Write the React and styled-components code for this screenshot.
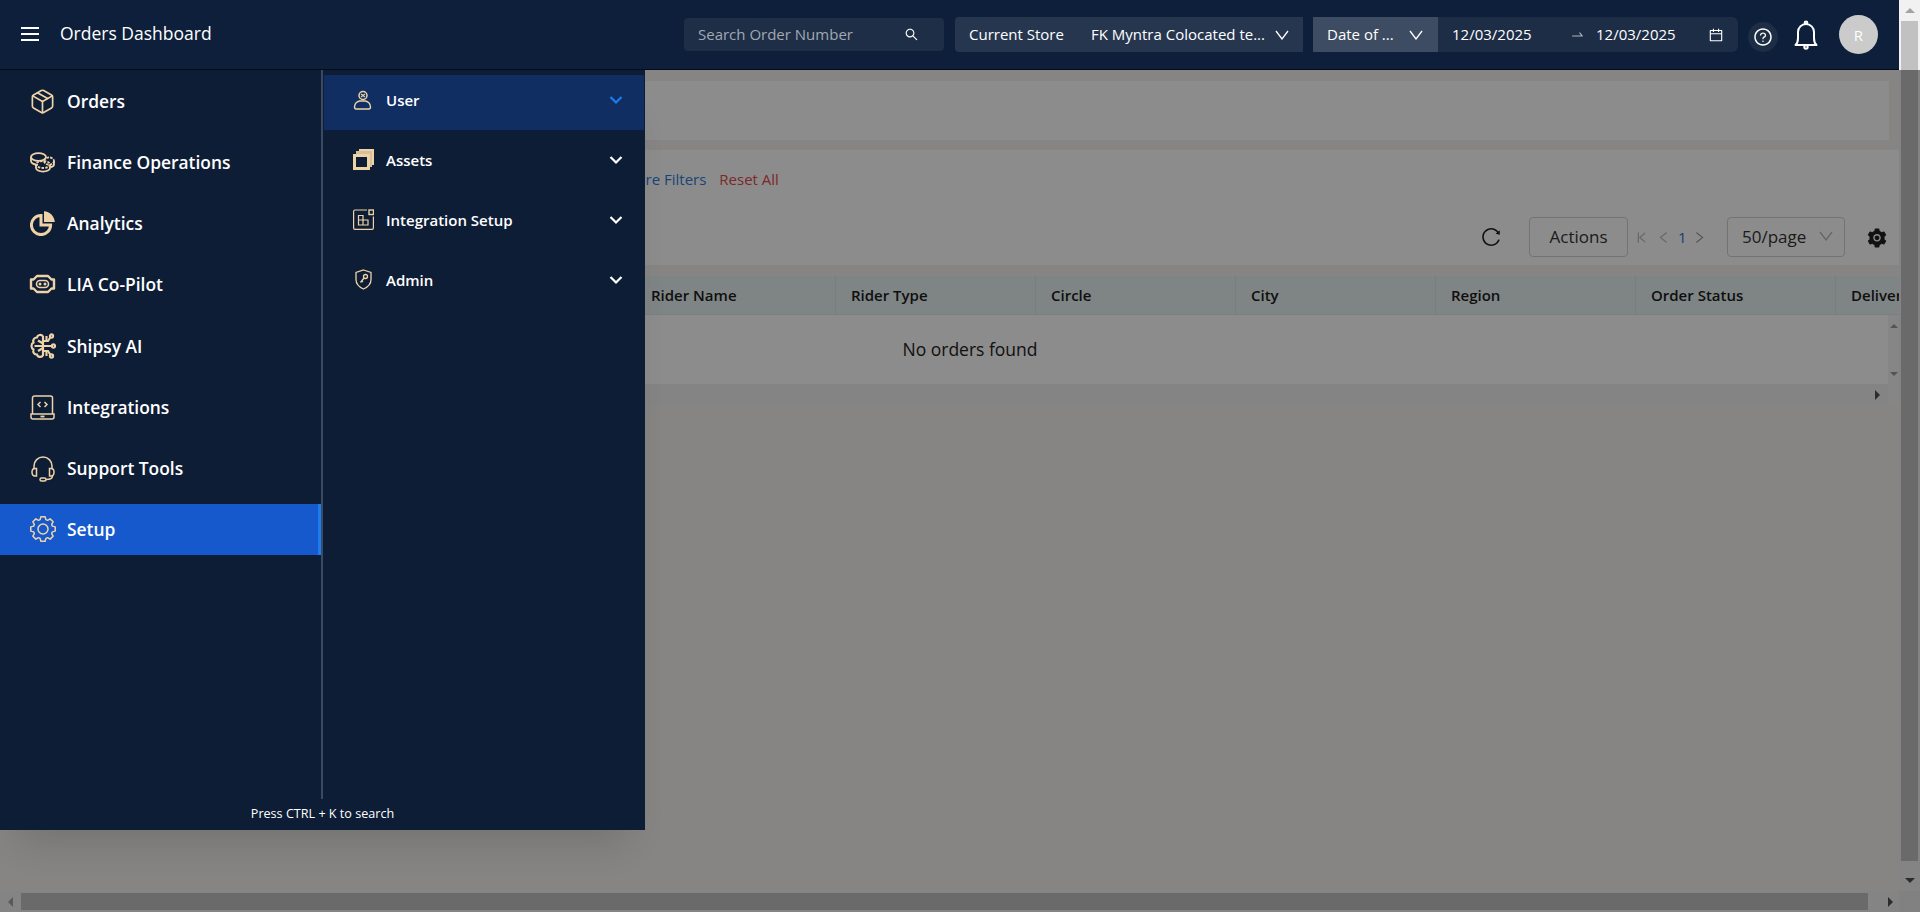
import React from "react";
import styled, { createGlobalStyle } from "styled-components";
import { Package } from "lucide-react";
import {
  AiFillSetting,
  AiOutlineCalendar,
  AiOutlineLeft,
  AiOutlineQuestionCircle,
  AiOutlineReload,
  AiOutlineRight,
  AiOutlineSearch,
  AiOutlineSwapRight,
  AiOutlineVerticalRight,
} from "react-icons/ai";

const GOLD = "#eed3a8";

const GlobalStyle = createGlobalStyle`
  html, body {
    margin: 0;
    padding: 0;
    overflow: hidden;
    font-family: "Open Sans", "Noto Sans", Arial, sans-serif;
  }
  * {
    box-sizing: border-box;
  }
`;

const Screen = styled.div`
  position: relative;
  width: 1920px;
  height: 912px;
  overflow: hidden;
  background: #f5f3ef;
`;

const Header = styled.header`
  display: flex;
  align-items: center;
  width: 1899px;
  height: 70px;
  padding: 0 21px 0 21px;
  background: #0d1f3a;
  border-bottom: 1px solid #060c16;
  color: #fff;
`;

const MenuLines = styled.span`
  display: flex;
  flex-direction: column;
  justify-content: space-between;
  width: 18px;
  height: 14px;
  margin: 0 21px 2px 0;

  i {
    display: block;
    height: 2px;
    background: #fff;
  }
`;

const Title = styled.div`
  flex: 1;
  margin-bottom: 4px;
  font-size: 17.5px;
`;

const BarText = styled.span`
  margin-bottom: 2px;
  white-space: nowrap;
`;

const SearchBox = styled.div`
  display: flex;
  align-items: center;
  justify-content: space-between;
  width: 260px;
  height: 33px;
  padding: 0 25px 0 14px;
  margin-right: 11px;
  border-radius: 4px;
  background: #1e2e47;
  color: #a2a8b1;
  font-size: 15px;

  svg {
    color: #fff;
    font-size: 15px;
  }
`;

const StoreSelect = styled.div`
  display: flex;
  align-items: center;
  width: 348px;
  height: 35px;
  padding: 0 14px;
  margin-right: 10px;
  border-radius: 4px 0 0 4px;
  background: #26364f;
  font-size: 15px;
`;

const StoreLabel = styled(BarText)`
  width: 122px;
`;

const StoreValue = styled(BarText)`
  flex: 1;
`;

const ThinChevron = styled.svg`
  flex: none;
  width: 14px;
  height: 10px;
`;

const DateGroup = styled.div`
  display: flex;
  width: 425px;
  height: 35px;
  margin-right: 10px;
  border-radius: 0 6px 6px 0;
  background: #1e2d46;
  font-size: 15px;
`;

const DateType = styled.div`
  display: flex;
  align-items: center;
  justify-content: space-between;
  width: 125px;
  padding: 0 15px 0 14px;
  background: #3d4c62;
`;

const DateRange = styled.div`
  display: flex;
  flex: 1;
  align-items: center;
  padding: 0 14px 0 14px;

  svg {
    flex: none;
    font-size: 15px;
  }
`;

const DateText = styled(BarText)`
  width: 79px;
`;

const DateArrow = styled(AiOutlineSwapRight)`
  margin: 0 11px 0 39px;
  color: #aeb4bd;
`;

const CalendarIcon = styled(AiOutlineCalendar)`
  margin-left: auto;
  font-size: 16px !important;
`;

const HelpButton = styled.div`
  display: flex;
  align-items: center;
  justify-content: center;
  width: 30px;
  height: 30px;
  margin: 4px 15px 0 0;
  border-radius: 50%;
  background: #1e2d46;
  font-size: 20px;
`;

const BellIcon = styled.svg`
  width: 26px;
  height: 30px;
  margin-right: 20px;
`;

const Avatar = styled.div`
  display: flex;
  align-items: center;
  justify-content: center;
  width: 39px;
  height: 39px;
  border-radius: 50%;
  background: #cbcbcb;
  font-size: 15px;
`;

const Content = styled.main`
  display: flex;
  flex-direction: column;
  width: 1899px;
  padding-top: 11px;
`;

const TopCard = styled.section`
  height: 59px;
  margin: 0 10px 10px 0;
  background: #fff;
`;

const ToolCard = styled.section`
  display: flex;
  flex-direction: column;
  height: 115px;
  margin-bottom: 11px;
  background: #fff;
`;

const FilterLinks = styled.div`
  display: flex;
  justify-content: flex-start;
  gap: 13px;
  height: 67px;
  padding: 19px 0 0 623px;
  font-size: 15px;
`;

const FilterLink = styled.span`
  color: ${(props) => (props.danger ? "#e04b4b" : "#2f7ddb")};
`;

const Toolbar = styled.div`
  display: flex;
  align-items: center;
  height: 40px;
`;

const RefreshIcon = styled(AiOutlineReload)`
  margin: 0 27px 0 1480px;
  font-size: 22px;
  color: #222;
`;

const ActionsButton = styled.div`
  display: flex;
  align-items: center;
  justify-content: center;
  width: 99px;
  height: 40px;
  padding-bottom: 2px;
  border: 1px solid #d2d2d2;
  border-radius: 4px;
  color: #333;
  font-size: 17px;
`;

const Pager = styled.div`
  display: flex;
  align-items: center;
  width: 99px;
  padding-left: 6px;
  color: #bbb;
  font-size: 15px;

  svg {
    margin-right: 7px;
  }

  svg:last-child {
    color: #999;
  }
`;

const PageNumber = styled.span`
  margin-right: 5px;
  color: #2f72cf;
`;

const PageSize = styled.div`
  display: flex;
  align-items: center;
  justify-content: space-between;
  width: 118px;
  height: 40px;
  padding: 0 11px 2px 14px;
  border: 1px solid #d2d2d2;
  border-radius: 4px;
  color: #333;
  font-size: 17px;
`;

const GearIcon = styled(AiFillSetting)`
  margin: 2px 0 0 21px;
  color: #222;
  font-size: 22px;
`;

const TableHead = styled.div`
  display: flex;
  height: 39px;
  overflow: hidden;
  padding-left: 636px;
  background: #e7f1f2;
  border-bottom: 1px solid #e3e8e8;
`;

const HeadCell = styled.div`
  flex: 0 0 200px;
  padding: 0 15px;
  border-right: 1px solid #dbe5e6;
  color: #1c1c1c;
  font-size: 15px;
  font-weight: 600;
  line-height: 38px;
  white-space: nowrap;
`;

const TableBody = styled.div`
  display: flex;
  height: 69px;
`;

const EmptyText = styled.div`
  flex: 1;
  padding: 22px 0 0 52px;
  background: #fff;
  color: #222;
  font-size: 17.5px;
  text-align: center;
`;

const TableScrollY = styled.div`
  display: flex;
  flex-direction: column;
  align-items: center;
  justify-content: space-between;
  width: 11px;
  padding: 9px 0 8px;
  background: #f4f4f4;
`;

const TableScrollX = styled.div`
  display: flex;
  align-items: center;
  justify-content: flex-end;
  height: 21px;
  padding-right: 8px;
  background: #f1f1f1;
`;

const Corner = styled.span`
  width: 11px;
  height: 21px;
  margin-left: 8px;
  margin-right: -8px;
  background: #f5f5f5;
`;

const opposite = { top: "bottom", bottom: "top", left: "right", right: "left" };

const Arrow = styled.span`
  width: 0;
  height: 0;
  border-style: solid;
  border-color: transparent;
  border-width: ${(props) => props.size || 5}px;
  ${(props) => `border-${props.side}-color: ${props.color || "#505050"};`}
  ${(props) => `border-${opposite[props.side]}-width: 0;`}
`;

const VerticalBar = styled.div`
  position: absolute;
  top: 0;
  right: 0;
  bottom: 0;
  display: flex;
  flex-direction: column;
  align-items: center;
  width: 21px;
  background: #f1f1f1;
`;

const BarArrowBox = styled.div`
  display: flex;
  flex: 0 0 21px;
  align-items: center;
  justify-content: center;
  width: 100%;
`;

const VerticalThumb = styled.div`
  flex: 1;
  width: 17px;
  margin-bottom: 9px;
  background: #c1c1c1;
`;

const BarCorner = styled.div`
  flex: 0 0 21px;
  width: 100%;
  background: #ebebeb;
`;

const HorizontalBar = styled.div`
  position: absolute;
  left: 0;
  right: 21px;
  bottom: 0;
  display: flex;
  align-items: center;
  height: 21px;
  background: #f1f1f1;
`;

const HorizontalThumb = styled.div`
  width: 1847px;
  height: 17px;
  background: #c1c1c1;
`;

const HorizontalArrow = styled(BarArrowBox)`
  flex: 0 0 21px;
  width: 21px;
`;

const HorizontalGap = styled.div`
  flex: 1;
  display: flex;
  align-items: center;
  justify-content: flex-end;
  padding-right: 6px;
`;

const Mask = styled.div`
  position: absolute;
  top: 70px;
  left: 0;
  right: 0;
  bottom: 0;
  background: rgba(0, 0, 0, 0.45);
`;

const Drawer = styled.nav`
  position: absolute;
  top: 70px;
  left: 0;
  display: flex;
  flex-direction: column;
  width: 645px;
  height: 760px;
  background: #0e1d36;
  box-shadow: 0 30px 36px -18px rgba(0, 0, 0, 0.14);
  color: #fff;
`;

const DrawerBody = styled.div`
  display: flex;
  flex: 1;
`;

const MainMenu = styled.div`
  display: flex;
  flex-direction: column;
  gap: 10px;
  width: 323px;
  padding-top: 7px;
  border-right: 2px solid #3a4a63;
`;

const MainItem = styled.div`
  display: flex;
  align-items: center;
  height: 51px;
  padding: 0 0 3px 29px;
  background: ${(props) => (props.active ? "#1659cc" : "transparent")};
  border-right: 3px solid ${(props) => (props.active ? "#1c7cf0" : "transparent")};
  font-size: 17.4px;
  font-weight: 600;

  &:nth-child(n + 5) {
    padding-bottom: 1px;
  }
`;

const MainIcon = styled.span`
  display: flex;
  align-items: center;
  justify-content: center;
  width: 27px;
  height: 27px;
  margin-right: 11px;
  color: ${GOLD};
`;

const SubMenu = styled.div`
  display: flex;
  flex: 1;
  flex-direction: column;
  gap: 5px;
  padding: 5px 1px 0;
`;

const SubItem = styled.div`
  display: flex;
  align-items: center;
  height: 55px;
  padding: 0 21px 6px 28px;
  background: ${(props) => (props.active ? "#112e63" : "transparent")};
  font-size: 15px;
  font-weight: 600;
`;

const SubIcon = styled.span`
  display: flex;
  align-items: center;
  justify-content: center;
  width: 22px;
  height: 22px;
  margin-right: 12px;
  color: ${GOLD};
`;

const SubLabel = styled.span`
  flex: 1;
`;

const SubChevron = styled.svg`
  width: 14px;
  height: 10px;
  margin-top: 0;
  color: ${(props) => (props.active ? "#1c7cf0" : "#fff")};
`;

const SearchHint = styled.div`
  display: flex;
  align-items: center;
  justify-content: center;
  height: 31px;
  padding-bottom: 2px;
  font-size: 12.6px;
`;

const FinanceIcon = () => (
  <svg width="27" height="24" viewBox="0 0 27 24" fill="none" stroke="currentColor" strokeWidth="1.8">
    <ellipse cx="9.5" cy="7" rx="7.5" ry="3.8" />
    <path d="M2 7v4c0 2 3 3.8 7 3.8" />
    <ellipse cx="14" cy="14.5" rx="7" ry="3.5" strokeDasharray="2.5 1.2" />
    <path d="M7 15v3c0 2 3.2 3.6 7 3.6s7-1.600 7-3.600v-3" />
    <ellipse cx="20" cy="11" rx="5" ry="3.6" strokeDasharray="2.5 1" />
    <path d="M25 11v3.5c0 1.200-1.200 2.200-3.500 2.800" />
  </svg>
);

const AnalyticsIcon = () => (
  <svg width="26" height="26" viewBox="0 0 26 26" fill="none">
    <path d="M11 5.4A9.6 9.6 0 1 0 20.6 15H11Z" stroke="currentColor" strokeWidth="3" />
    <path d="M14 1.2C19.8 1.6 24.4 6.2 24.8 12H14Z" fill="currentColor" />
  </svg>
);

const CopilotIcon = () => (
  <svg width="27" height="20" viewBox="0 0 27 20" fill="none" stroke="currentColor" strokeWidth="2.4">
    <path d="M8 2h11l3.500 3.500H25v9h-2.500L19 18H8l-3.500-3.500H2v-9h2.500Z" strokeLinejoin="round" />
    <rect x="7.5" y="6.5" width="12" height="7" rx="3.5" strokeWidth="1.6" />
    <circle cx="11" cy="10" r="1.5" fill="currentColor" stroke="none" />
    <circle cx="16" cy="10" r="1.5" fill="currentColor" stroke="none" />
  </svg>
);

const BrainIcon = () => (
  <svg width="26" height="26" viewBox="0 0 26 26" fill="none" stroke="currentColor" strokeWidth="2.1">
    <path d="M13 3.500C11.500 1 7.500 1.500 7 4.500 4 4.500 2.500 7 3.500 9.500 .8 11 .8 15 3.500 16.500c-1 2.800.8 5 3.500 5 .5 2.800 4.700 3.300 6 .8Z" />
    <path d="M13 3.500v18.800M4.500 13H13M8 7.500l5 3M8 18l5-3" />
    <path d="M13 8h5l2.500-4M13 13h8.500M13 18h5l2.500 4" />
    <circle cx="21.500" cy="3" r="1.600" />
    <circle cx="23.500" cy="13" r="1.600" />
    <circle cx="21.500" cy="23" r="1.600" />
    <path d="M16.500 8V3M16.500 18v5" />
  </svg>
);

const LaptopIcon = () => (
  <svg width="25" height="25" viewBox="0 0 25 25" fill="none" stroke="currentColor" strokeWidth="1.5">
    <path d="M2.500 19V3a2 2 0 0 1 2-2h16a2 2 0 0 1 2 2v16" />
    <path d="M1 19h23v3a2 2 0 0 1-2 2H3a2 2 0 0 1-2-2Z" />
    <path d="M10.500 7 8 9.500l2.500 2.500M14.500 7 17 9.500 14.500 12" />
    <path d="M10.500 21.500h4" strokeWidth="1.8" />
  </svg>
);

const HeadsetIcon = () => (
  <svg width="26" height="27" viewBox="0 0 26 27" fill="none" stroke="currentColor" strokeWidth="1.5">
    <path d="M4 14v-3a9 9 0 0 1 18 0v3" />
    <path d="M2 17c0-2 1-3.500 3-3.500h1.500v7.500H5c-2 0-3-1.500-3-4Z" />
    <path d="M24 17c0-2-1-3.500-3-3.500h-1.500v7.500H21c2 0 3-1.500 3-4Z" />
    <path d="M22.500 21c0 2.500-3 3.500-6.500 3.500" />
    <rect x="10" y="23" width="6" height="3" rx="1.5" />
  </svg>
);

// eight toothed outline, the Setup row gear
const gearPath = () => {
  const points = [];
  for (let i = 0; i < 8; i++) {
    const a = (i * Math.PI) / 4;
    [[-0.3, 9.8], [-0.17, 12.4], [0.17, 12.4], [0.3, 9.8]].forEach(([o, r]) => {
      points.push(`${(13 + r * Math.sin(a + o)).toFixed(2)} ${(13 - r * Math.cos(a + o)).toFixed(2)}`);
    });
  }
  return `M${points.join("L")}Z`;
};

const GearOutlineIcon = () => (
  <svg width="26" height="26" viewBox="0 0 26 26" fill="none" stroke="currentColor" strokeWidth="1.5" strokeLinejoin="round">
    <path d={gearPath()} />
    <circle cx="13" cy="13" r="5" />
  </svg>
);

const UserIcon = () => (
  <svg width="20" height="20" viewBox="0 0 20 20" fill="none" stroke="currentColor" strokeWidth="1.5">
    <circle cx="10" cy="5.5" r="4" />
    <path d="M8 4l4 3M12 4 8 7" strokeWidth="1.1" />
    <path d="M3 19c-1.300-.2-1.500-1-1.500-2 0-3.500 3-5.500 5-6h6c2 .5 5 2.500 5 6 0 1-.2 1.800-1.500 2Z" />
  </svg>
);

const AssetsIcon = () => (
  <svg width="21" height="21" viewBox="0 0 21 21">
    <path fill="currentColor" d="M6 0h15v16h-2V2H6Z" />
    <path fill="currentColor" d="M3 2h16v16h-2V5H3Z" opacity="0.9" />
    <path fill="currentColor" fillRule="evenodd" d="M0 5h17v16H0Zm3 3v10h11V8Z" />
  </svg>
);

const SetupBoxIcon = () => (
  <svg width="21" height="21" viewBox="0 0 21 21" fill="none" stroke="currentColor" strokeWidth="1.2">
    <path d="M14 1H2a1.400 1.400 0 0 0-1.400 1.400V19A1.400 1.400 0 0 0 2 20.400h17a1.400 1.400 0 0 0 1.400-1.400V7.500" />
    <rect x="16" y="1" width="4.5" height="4.5" strokeWidth="1.4" />
    <path d="M5.500 6.500h4.500v4.500h5v5h-9.500Z" />
    <path d="M5.500 11h4.500v5" />
  </svg>
);

const ShieldIcon = () => (
  <svg width="17" height="21" viewBox="0 0 17 21" fill="none" stroke="currentColor">
    <path d="M8.500 1 16 3.500v7c0 4.500-3 7.500-7.500 9.500C4 18 1 15 1 10.500v-7Z" strokeWidth="1.3" />
    <circle cx="10.5" cy="7.5" r="2" strokeWidth="1.3" />
    <path d="M9 9 5.500 13.500M6.500 12l1.500 1" strokeWidth="1.3" />
  </svg>
);

const DownV = ({ color = "#fff" }) => (
  <ThinChevron viewBox="0 0 14 10" fill="none" stroke={color} strokeWidth="1.3">
    <path d="M1 1 7 9 13 1" />
  </ThinChevron>
);

const mainItems = [
  { label: "Orders", icon: <Package size={27} strokeWidth={1.5} /> },
  { label: "Finance Operations", icon: <FinanceIcon /> },
  { label: "Analytics", icon: <AnalyticsIcon /> },
  { label: "LIA Co-Pilot", icon: <CopilotIcon /> },
  { label: "Shipsy AI", icon: <BrainIcon /> },
  { label: "Integrations", icon: <LaptopIcon /> },
  { label: "Support Tools", icon: <HeadsetIcon /> },
  { label: "Setup", icon: <GearOutlineIcon />, active: true },
];

const subItems = [
  { label: "User", icon: <UserIcon />, active: true },
  { label: "Assets", icon: <AssetsIcon /> },
  { label: "Integration Setup", icon: <SetupBoxIcon /> },
  { label: "Admin", icon: <ShieldIcon /> },
];

const columns = ["Rider Name", "Rider Type", "Circle", "City", "Region", "Order Status", "Delivery Type"];

const App = () => (
  <Screen>
    <GlobalStyle />
    <Header>
      <MenuLines>
        <i />
        <i />
        <i />
      </MenuLines>
      <Title>Orders Dashboard</Title>
      <SearchBox>
        <BarText>Search Order Number</BarText>
        <AiOutlineSearch />
      </SearchBox>
      <StoreSelect>
        <StoreLabel>Current Store</StoreLabel>
        <StoreValue>FK Myntra Colocated te...</StoreValue>
        <DownV />
      </StoreSelect>
      <DateGroup>
        <DateType>
          <BarText>Date of ...</BarText>
          <DownV />
        </DateType>
        <DateRange>
          <DateText>12/03/2025</DateText>
          <DateArrow />
          <DateText>12/03/2025</DateText>
          <CalendarIcon />
        </DateRange>
      </DateGroup>
      <HelpButton>
        <AiOutlineQuestionCircle />
      </HelpButton>
      <BellIcon viewBox="0 0 26 30" fill="none" stroke="#fff" strokeWidth="2">
        <path d="M2.500 25c1.800-1.500 2.500-3.500 2.500-7v-6a8 8 0 0 1 16 0v6c0 3.500.7 5.500 2.500 7Z" strokeLinejoin="round" />
        <circle cx="13" cy="2.8" r="1.3" />
        <circle cx="13" cy="27" r="1.7" />
      </BellIcon>
      <Avatar>R</Avatar>
    </Header>

    <Content>
      <TopCard />
      <ToolCard>
        <FilterLinks>
          <FilterLink>More Filters</FilterLink>
          <FilterLink danger>Reset All</FilterLink>
        </FilterLinks>
        <Toolbar>
          <RefreshIcon />
          <ActionsButton>Actions</ActionsButton>
          <Pager>
            <AiOutlineVerticalRight />
            <AiOutlineLeft />
            <PageNumber>1</PageNumber>
            <AiOutlineRight />
          </Pager>
          <PageSize>
            50/page
            <DownV color="#bbb" />
          </PageSize>
          <GearIcon />
        </Toolbar>
      </ToolCard>
      <TableHead>
        {columns.map((column) => (
          <HeadCell key={column}>{column}</HeadCell>
        ))}
      </TableHead>
      <TableBody>
        <EmptyText>No orders found</EmptyText>
        <TableScrollY>
          <Arrow side="bottom" size={4} color="#999" />
          <Arrow side="top" size={4} color="#999" />
        </TableScrollY>
      </TableBody>
      <TableScrollX>
        <Arrow side="left" />
        <Corner />
      </TableScrollX>
    </Content>

    <VerticalBar>
      <BarArrowBox>
        <Arrow side="bottom" color="#a3a3a3" />
      </BarArrowBox>
      <VerticalThumb />
      <BarArrowBox>
        <Arrow side="top" />
      </BarArrowBox>
      <BarCorner />
    </VerticalBar>
    <HorizontalBar>
      <HorizontalArrow>
        <Arrow side="right" color="#a3a3a3" />
      </HorizontalArrow>
      <HorizontalThumb />
      <HorizontalGap>
        <Arrow side="left" />
      </HorizontalGap>
    </HorizontalBar>

    <Mask />

    <Drawer>
      <DrawerBody>
        <MainMenu>
          {mainItems.map((item) => (
            <MainItem key={item.label} active={item.active}>
              <MainIcon>{item.icon}</MainIcon>
              {item.label}
            </MainItem>
          ))}
        </MainMenu>
        <SubMenu>
          {subItems.map((item) => (
            <SubItem key={item.label} active={item.active}>
              <SubIcon>{item.icon}</SubIcon>
              <SubLabel>{item.label}</SubLabel>
              <SubChevron active={item.active} viewBox="0 0 14 10" fill="none" stroke="currentColor" strokeWidth="2.2">
                <path d="M1.500 2 7 7.500 12.500 2" />
              </SubChevron>
            </SubItem>
          ))}
        </SubMenu>
      </DrawerBody>
      <SearchHint>Press CTRL + K to search</SearchHint>
    </Drawer>
  </Screen>
);

export default App;
